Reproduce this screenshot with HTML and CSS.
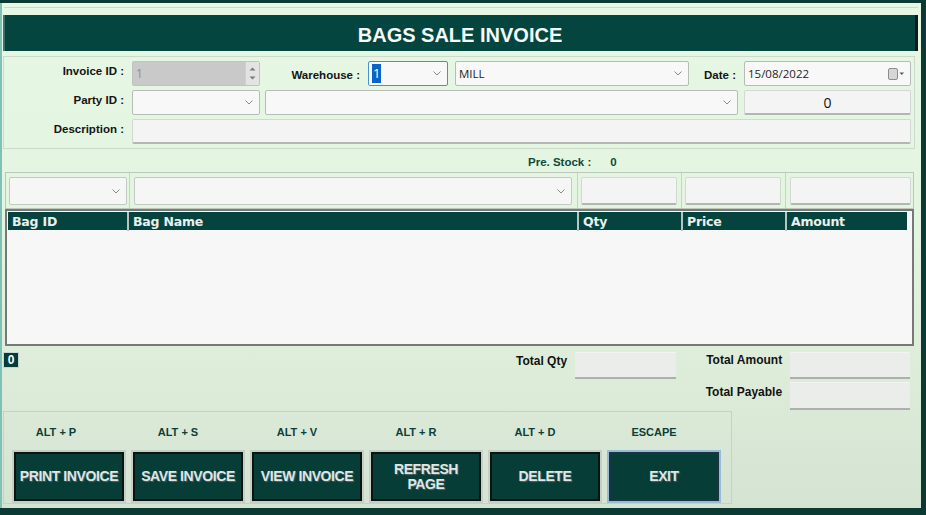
FILE: index.html
```html
<!DOCTYPE html>
<html>
<head>
<meta charset="utf-8">
<title>Bags Sale Invoice</title>
<link rel="stylesheet" href="styles.css">
</head>
<body>
<div class="window">
  <div class="topline"></div>
  <header class="title">BAGS SALE INVOICE</header>

  <section class="form">
    <div class="row">
      <span class="lbl lbl-main">Invoice ID :</span>
      <div class="field spin w-128">
        <span class="val grey">1</span>
        <span class="spinbtns">
          <svg width="7" height="4" viewBox="0 0 7 4"><path d="M0.5 3.5 L3.5 0.5 L6.5 3.5Z" fill="#7a7a7a"/></svg>
          <svg width="7" height="4" viewBox="0 0 7 4"><path d="M0.5 0.5 L3.5 3.5 L6.5 0.5Z" fill="#7a7a7a"/></svg>
        </span>
      </div>
      <span class="lbl lbl-wh">Warehouse :</span>
      <div class="field select focus w-80">
        <span class="val"><span class="sel">1</span></span>
        <svg class="chev" width="8" height="5" viewBox="0 0 8 5"><polyline points="0.5,0.5 4,4 7.5,0.5" fill="none" stroke="#8a8a8a"/></svg>
      </div>
      <div class="field select w-234 ml-7">
        <span class="val">MILL</span>
        <svg class="chev" width="8" height="5" viewBox="0 0 8 5"><polyline points="0.5,0.5 4,4 7.5,0.5" fill="none" stroke="#8a8a8a"/></svg>
      </div>
      <span class="lbl lbl-date">Date :</span>
      <div class="field date w-167">
        <span class="val">15/08/2022</span>
        <svg class="cal" width="17" height="12" viewBox="0 0 17 12"><rect x="0.5" y="0.5" width="9" height="11" rx="1.5" fill="#d6d6d6" stroke="#8c8c8c"/><path d="M11.5 4.5 L16 4.5 L13.75 7Z" fill="#555"/></svg>
      </div>
    </div>

    <div class="row">
      <span class="lbl lbl-main">Party ID :</span>
      <div class="field select w-128">
        <span class="val"></span>
        <svg class="chev" width="8" height="5" viewBox="0 0 8 5"><polyline points="0.5,0.5 4,4 7.5,0.5" fill="none" stroke="#8a8a8a"/></svg>
      </div>
      <div class="field select w-473 ml-5">
        <span class="val"></span>
        <svg class="chev" width="8" height="5" viewBox="0 0 8 5"><polyline points="0.5,0.5 4,4 7.5,0.5" fill="none" stroke="#8a8a8a"/></svg>
      </div>
      <div class="field text center w-167 ml-6">
        <span class="num">0</span>
      </div>
    </div>

    <div class="row">
      <span class="lbl lbl-main">Description :</span>
      <div class="field text w-779"></div>
    </div>
  </section>

  <div class="prestock">
    <span class="ps-lbl">Pre. Stock :</span>
    <span class="ps-val">0</span>
  </div>

  <section class="entry">
    <div class="cell">
      <div class="field select grow">
        <span class="val"></span>
        <svg class="chev" width="8" height="5" viewBox="0 0 8 5"><polyline points="0.5,0.5 4,4 7.5,0.5" fill="none" stroke="#8a8a8a"/></svg>
      </div>
    </div>
    <div class="cell">
      <div class="field select grow">
        <span class="val"></span>
        <svg class="chev" width="8" height="5" viewBox="0 0 8 5"><polyline points="0.5,0.5 4,4 7.5,0.5" fill="none" stroke="#8a8a8a"/></svg>
      </div>
    </div>
    <div class="cell"><div class="field text grow"></div></div>
    <div class="cell"><div class="field text grow"></div></div>
    <div class="cell"><div class="field text grow"></div></div>
  </section>

  <section class="grid">
    <div class="ghead">
      <div class="gh">Bag ID</div>
      <div class="gh">Bag Name</div>
      <div class="gh">Qty</div>
      <div class="gh">Price</div>
      <div class="gh last">Amount</div>
    </div>
    <div class="gbody"></div>
  </section>

  <section class="summary">
    <div class="badge">0</div>
    <div class="qty">
      <span class="tlbl tl-qty">Total Qty</span>
      <div class="tbox w-101"></div>
    </div>
    <div class="amounts">
      <span class="tlbl">Total Amount</span>
      <div class="tbox"></div>
      <span class="tlbl">Total Payable</span>
      <div class="tbox tall"></div>
    </div>
  </section>

  <section class="actions">
    <div class="act">
      <span class="key first">ALT + P</span>
      <button class="btn">PRINT INVOICE</button>
    </div>
    <div class="act">
      <span class="key">ALT + S</span>
      <button class="btn">SAVE INVOICE</button>
    </div>
    <div class="act">
      <span class="key">ALT + V</span>
      <button class="btn">VIEW INVOICE</button>
    </div>
    <div class="act">
      <span class="key">ALT + R</span>
      <button class="btn">REFRESH<br>PAGE</button>
    </div>
    <div class="act">
      <span class="key">ALT + D</span>
      <button class="btn">DELETE</button>
    </div>
    <div class="act">
      <span class="key">ESCAPE</span>
      <button class="btn exit">EXIT</button>
    </div>
  </section>
</div>
</body>
</html>
```

FILE: styles.css
```css
* { box-sizing: border-box; }

html, body {
  margin: 0;
  padding: 0;
}

body {
  width: 926px;
  height: 515px;
  overflow: hidden;
  background: #0b3a35;
  font-family: "Liberation Sans", Arial, sans-serif;
  color: #161616;
  padding-top: 3px;
}

.window {
  width: 921px;
  height: 505px;
  padding-left: 2px;
  border-left: 2px solid #7fc1b6;
  background: linear-gradient(180deg, #e6f7e4 0%, #e3f4e1 45%, #dcecd9 75%, #d5e3d2 100%);
  display: flex;
  flex-direction: column;
}

.topline {
  flex: none;
  height: 1px;
  margin-top: 4px;
  margin-right: 3px;
  background: #cad9c9;
}

.title {
  flex: none;
  margin: 7px 3px 0 -1px;
  height: 36px;
  background: #05453f;
  border-left: 2px solid #3f716b;
  border-right: 3px solid #101816;
  color: #f6faf8;
  font-weight: bold;
  font-size: 20px;
  letter-spacing: 0;
  line-height: 40px;
  text-align: center;
}

/* ---------- header form ---------- */
.form {
  flex: none;
  margin: 5px 6px 0 -1px;
  border: 1px solid #cbdacb;
  padding: 4px 0 4px 0;
  display: flex;
  flex-direction: column;
  gap: 4px;
}

.row {
  display: flex;
  align-items: center;
  height: 25px;
}

.lbl {
  font-weight: bold;
  font-size: 11.5px;
  color: #141414;
  white-space: nowrap;
}

.lbl-main {
  width: 120px;
  text-align: right;
  margin-right: 8px;
  align-self: flex-start;
  padding-top: 4px;
}

.lbl-wh {
  width: 70px;
  margin-left: 30px;
  margin-right: 8px;
  text-align: right;
  padding-top: 2px;
}

.lbl-date {
  width: 34px;
  margin-left: 13px;
  margin-right: 8px;
  text-align: right;
  padding-top: 2px;
}

.field {
  height: 25px;
  display: flex;
  align-items: center;
  padding: 0 3px;
  background: #f7f8f7;
  border: 1px solid #b6bdb6;
  border-radius: 2px;
  font-family: "Open Sans", "Noto Sans", sans-serif;
  font-size: 11.5px;
  color: #1e1e1e;
}

.field .val {
  flex: 1;
  white-space: nowrap;
}

.field .chev {
  margin-right: 3px;
  flex: none;
}

.field.text {
  background: #f3f4f3;
  border: 1px solid #d2d9d2;
  border-bottom: 2px solid #b3b7b3;
}

.field.center { justify-content: center; }

.num {
  font-size: 14px;
  color: #111;
}

.spin {
  background: #c9c9c9;
  border-color: #c2c2c2;
  padding-right: 0;
}

.grey { color: #8e8e8e; font-size: 12px; }

.spinbtns {
  width: 14px;
  height: 23px;
  background: #e3e3e3;
  border-left: 1px solid #d0d0d0;
  display: flex;
  flex-direction: column;
  align-items: center;
  justify-content: center;
  gap: 5px;
}

.focus {
  border-color: #4a8fd6;
}

.sel {
  background: #0a63c9;
  color: #fff;
  padding: 0 1px;
  font-size: 13px;
  line-height: 19px;
  display: inline-block;
}

.date .cal { margin-right: 2px; }

.w-80 { width: 80px; }
.w-101 { width: 101px; }
.w-128 { width: 128px; }
.w-167 { width: 167px; }
.w-234 { width: 234px; }
.w-473 { width: 473px; }
.w-779 { width: 779px; }
.ml-5 { margin-left: 5px; }
.ml-6 { margin-left: 6px; }
.ml-7 { margin-left: 7px; }

/* ---------- pre stock ---------- */
.prestock {
  flex: none;
  height: 23px;
  display: flex;
  align-items: center;
  padding-left: 524px;
  padding-top: 2px;
  font-weight: bold;
  font-size: 11.5px;
  color: #0c4a3c;
}

.ps-val { margin-left: 19px; }

/* ---------- entry row ---------- */
.entry {
  flex: none;
  margin: 0 7px 0 1px;
  border: 1px solid #bcc7bc;
  display: grid;
  grid-template-columns: 124px 448px 104px 104px 1fr;
}

.cell {
  display: flex;
  padding: 4px 2px 3px 3px;
  border-right: 1px solid #c9d2c9;
}

.cell:nth-child(2) { padding-left: 4px; padding-right: 5px; }
.cell:nth-child(3),
.cell:nth-child(4) { padding-left: 3px; padding-right: 4px; }
.cell:last-child { border-right: none; padding-left: 4px; padding-right: 2px; }

.cell .field { height: 28px; }
.grow { flex: 1; }

.cell .field.select {
  background: #f5f6f5;
  border-color: #c3c9c3;
}

/* ---------- grid ---------- */
.grid {
  flex: none;
  margin: 0 7px 0 1px;
  height: 137px;
  border: 2px solid #767a76;
  background: #f7f7f7;
  padding: 1px 5px 0 1px;
  display: flex;
  flex-direction: column;
}

.ghead {
  height: 18px;
  display: grid;
  grid-template-columns: 121px 450px 104px 104px 1fr;
  background: #05443e;
}

.gh {
  font-family: "DejaVu Sans", Verdana, sans-serif;
  font-weight: bold;
  font-size: 12.5px;
  line-height: 19px;
  color: #eaf0ee;
  padding-left: 4px;
  border-right: 2px solid #b7c4c1;
  letter-spacing: -0.2px;
}

.gh.last { border-right: none; }

.gbody { flex: 1; }

/* ---------- summary ---------- */
.summary {
  flex: none;
  height: 65px;
  display: flex;
  padding-top: 6px;
}

.badge {
  margin-top: 0;
  margin-left: -1px;
  width: 16px;
  height: 16px;
  background: #063c37;
  border: 1px solid #c9d6cf;
  color: #fff;
  font-weight: bold;
  font-size: 12px;
  line-height: 14px;
  text-align: center;
}

.qty {
  display: flex;
  margin-left: 497px;
  align-items: flex-start;
}

.tlbl {
  font-weight: bold;
  font-size: 12px;
  color: #121212;
  padding-top: 2px;
  white-space: nowrap;
  text-align: right;
}

.tl-qty { margin-right: 8px; }

.tbox {
  height: 27px;
  background: #ebedeb;
  border-top: 1px solid #f2f3f2;
  border-bottom: 2px solid #adb0ad;
}

.amounts {
  margin-left: 27px;
  display: grid;
  grid-template-columns: 79px 120px;
  column-gap: 8px;
  row-gap: 2px;
  align-items: start;
}

.amounts .tlbl { padding-top: 3px; }
.amounts .tlbl:first-child { padding-top: 1px; }
.tbox.tall { height: 28px; }

/* ---------- actions ---------- */
.actions {
  flex: none;
  margin-left: -1px;
  width: 729px;
  height: 93px;
  border: 1px solid #c5d3c4;
  display: flex;
  gap: 9px;
  padding: 14px 0 0 10px;
}

.act {
  width: 110px;
  display: flex;
  flex-direction: column;
  align-items: center;
}

.key {
  height: 14px;
  margin-bottom: 12px;
  padding-right: 20px;
  width: 100%;
  text-align: center;
  font-weight: bold;
  font-size: 11px;
  color: #0d3d38;
}

.key.first { padding-right: 26px; }

.btn {
  width: 110px;
  height: 49px;
  padding: 0;
  background: #063d37;
  border: 2px solid #0c1412;
  box-shadow: 0 0 0 2px #c4cfc5;
  color: #dfe6e4;
  font-family: "Liberation Sans", Arial, sans-serif;
  font-weight: bold;
  font-size: 14px;
  letter-spacing: -0.4px;
  line-height: 15px;
  text-shadow: 1px 1px 1px #536462;
}

.btn.exit {
  border-color: #1b3442;
  box-shadow: 0 0 0 2px #97bcd8;
}
```
